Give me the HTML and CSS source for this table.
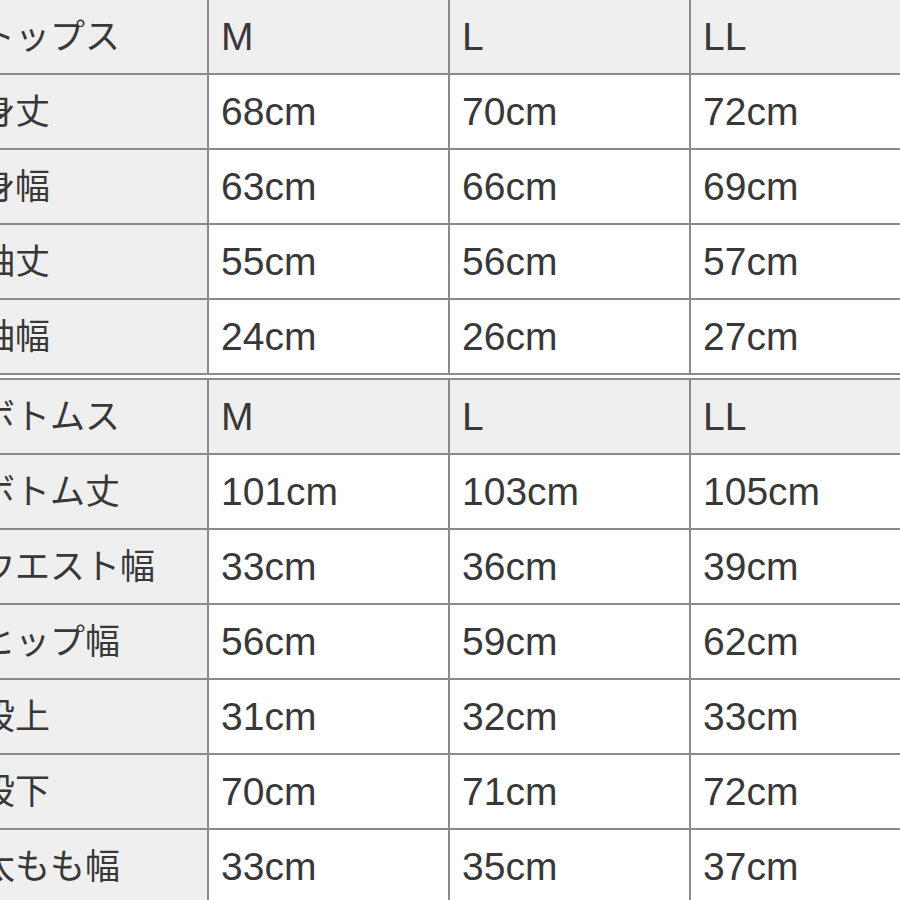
FILE: index.html
```html
<!DOCTYPE html>
<html lang="ja">
<head>
<meta charset="utf-8">
<title>サイズ表</title>
<link rel="stylesheet" href="styles.css">
</head>
<body>
<div class="sheet">
  <div class="size-table">
    <div class="cell head label">トップス</div>
    <div class="cell head">M</div>
    <div class="cell head">L</div>
    <div class="cell head">LL</div>

    <div class="cell label">身丈</div>
    <div class="cell">68cm</div>
    <div class="cell">70cm</div>
    <div class="cell">72cm</div>

    <div class="cell label">身幅</div>
    <div class="cell">63cm</div>
    <div class="cell">66cm</div>
    <div class="cell">69cm</div>

    <div class="cell label">袖丈</div>
    <div class="cell">55cm</div>
    <div class="cell">56cm</div>
    <div class="cell">57cm</div>

    <div class="cell label">袖幅</div>
    <div class="cell">24cm</div>
    <div class="cell">26cm</div>
    <div class="cell">27cm</div>
  </div>

  <div class="size-table">
    <div class="cell head label">ボトムス</div>
    <div class="cell head">M</div>
    <div class="cell head">L</div>
    <div class="cell head">LL</div>

    <div class="cell label">ボトム丈</div>
    <div class="cell">101cm</div>
    <div class="cell">103cm</div>
    <div class="cell">105cm</div>

    <div class="cell label">ウエスト幅</div>
    <div class="cell">33cm</div>
    <div class="cell">36cm</div>
    <div class="cell">39cm</div>

    <div class="cell label">ヒップ幅</div>
    <div class="cell">56cm</div>
    <div class="cell">59cm</div>
    <div class="cell">62cm</div>

    <div class="cell label">股上</div>
    <div class="cell">31cm</div>
    <div class="cell">32cm</div>
    <div class="cell">33cm</div>

    <div class="cell label">股下</div>
    <div class="cell">70cm</div>
    <div class="cell">71cm</div>
    <div class="cell">72cm</div>

    <div class="cell label">太もも幅</div>
    <div class="cell">33cm</div>
    <div class="cell">35cm</div>
    <div class="cell">37cm</div>
  </div>
</div>
</body>
</html>
```
FILE: styles.css
```css
html, body {
  margin: 0;
  padding: 0;
  background: #ffffff;
  overflow: hidden;
}

body {
  font-family: "Liberation Sans", "Noto Sans CJK JP", sans-serif;
  color: #383838;
}

.sheet {
  margin: -2px 0 0 -34px;
  display: flex;
  flex-direction: column;
  gap: 3px;
  width: 1000px;
}

.size-table {
  display: grid;
  grid-template-columns: repeat(4, 239px);
  grid-auto-rows: 73px;
  gap: 2px;
  padding: 2px;
  background: #8a8a8a;
  width: max-content;
}

.cell {
  background: #ffffff;
  display: flex;
  align-items: center;
  padding-left: 12px;
  font-size: 39px;
  line-height: 1;
  white-space: nowrap;
  overflow: hidden;
}

.head,
.label {
  background: #efefef;
}

.label {
  font-size: 35px;
}
```
